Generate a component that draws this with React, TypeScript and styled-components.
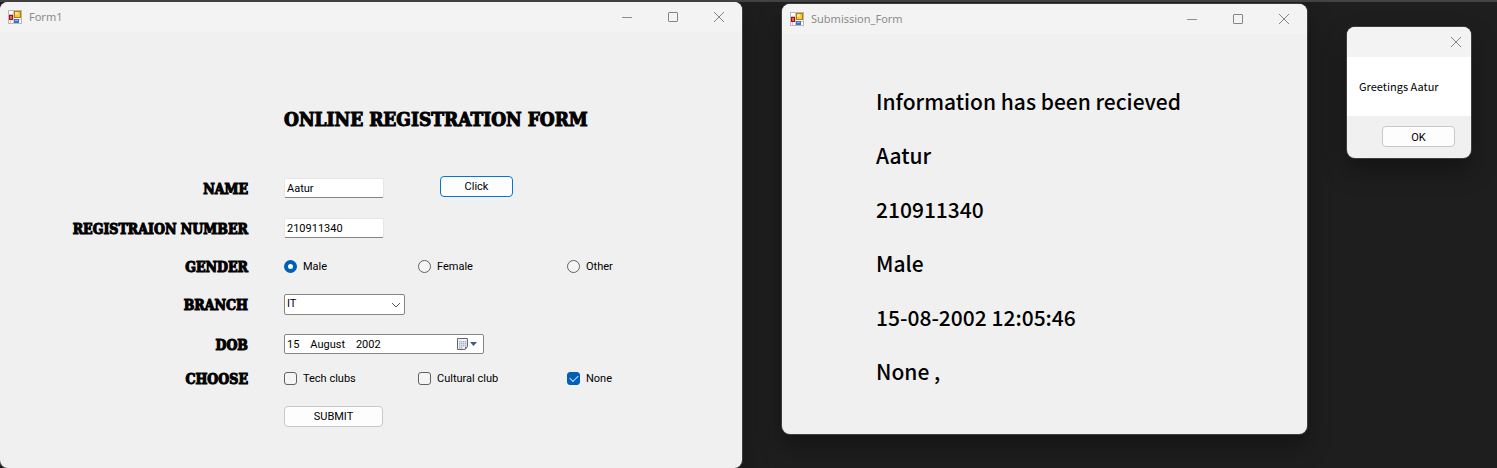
import React from 'react';
import styled, { createGlobalStyle } from 'styled-components';

const GlobalStyle = createGlobalStyle`
  * { box-sizing: border-box; }
  body {
    margin: 0;
    background: #1e1e1e;
    color: #000;
    font: 11px/16px "Noto Sans CJK JP", "Noto Sans", sans-serif;
  }
  button, input, select { font: inherit; color: inherit; margin: 0; }
`;

const Desktop = styled.main`
  display: grid;
  grid-template-columns: 742fr 525fr 124fr;
  column-gap: 40px;
  align-items: start;
  min-height: 100vh;
  padding-right: 26px;
  border-top: 2px solid #434343;
`;

const Frame = styled.section<{ $top?: number; $fill?: boolean }>`
  display: flex;
  flex-direction: column;
  align-self: ${(p) => (p.$fill ? 'stretch' : 'start')};
  margin-top: ${(p) => p.$top ?? 0}px;
  min-width: 0;
  border-radius: 8px;
  overflow: hidden;
  background: #f0f0f0;
  box-shadow: 0 0 0 1px #3c3f3e, 0 12px 24px rgba(0, 0, 0, 0.35);
`;

const TitleBar = styled.header`
  display: flex;
  align-items: center;
  height: 30px;
  padding-left: 8px;
  background: #f3f3f3;
  color: #8c8c8c;
`;

const Caption = styled.h2`
  flex: 1;
  margin: 0 0 0 7px;
  font: 400 11px/16px "Noto Sans", sans-serif;
`;

const CaptionButton = styled.button<{ $narrow?: boolean }>`
  display: flex;
  align-items: center;
  justify-content: center;
  width: ${(p) => (p.$narrow ? 30 : 46)}px;
  height: 28px;
  padding: 0;
  border: 0;
  background: none;
`;

const FormBody = styled.form`
  padding: 71px 24px 28px 0;
  font-family: Roboto, "Liberation Sans", sans-serif;
`;

const FormTitle = styled.h1`
  margin: 0 0 33px 284px;
  font: 700 19px/32px "DejaVu Serif Condensed", "DejaVu Serif", serif;
  -webkit-text-stroke: 1px #000;
  white-space: nowrap;
`;

const Row = styled.div<{ $height: number }>`
  display: grid;
  grid-template-columns: 248px 1fr;
  column-gap: 36px;
  align-items: center;
  height: ${(p) => p.$height}px;
`;

const labelFont = `
  padding-top: 2px;
  font: 700 14px/20px "DejaVu Serif Condensed", "DejaVu Serif", serif;
  -webkit-text-stroke: 1px #000;
  text-align: right;
  white-space: nowrap;
`;

const FieldLabel = styled.label`
  ${labelFont}
`;

const GroupLabel = styled.span`
  ${labelFont}
`;

const Controls = styled.div`
  display: flex;
  align-items: center;
`;

const TextBox = styled.input`
  width: 100px;
  height: 20px;
  padding: 0 2px;
  border: 1px solid #e6e6e6;
  border-bottom-color: #868686;
  border-radius: 2px;
  background: #fff;
`;

const PushButton = styled.button<{ $width?: number; $primary?: boolean }>`
  width: ${(p) => p.$width ?? 73}px;
  height: 21px;
  padding: 2px 0 0;
  border: 1px solid ${(p) => (p.$primary ? '#0078d4' : '#c8c8c8')};
  border-radius: 4px;
  background: #fdfdfd;
  font-family: Roboto, "Liberation Sans", sans-serif;
`;

const ClickSlot = styled.div`
  margin-left: 56px;
  padding-bottom: 4px;
`;

const Options = styled.div`
  display: grid;
  grid-template-columns: 134px 149px 1fr;
`;

const Option = styled.label`
  display: flex;
  align-items: center;
  gap: 6px;
  line-height: 17px;
`;

const Radio = styled.input`
  appearance: none;
  width: 13px;
  height: 13px;
  border: 1px solid #626262;
  border-radius: 50%;
  background: #f5f5f5;
  &:checked {
    border: 4px solid #005fb8;
    background: #fff;
  }
`;

const Check = styled.input`
  appearance: none;
  display: grid;
  place-items: center;
  width: 13px;
  height: 13px;
  border: 1px solid #626262;
  border-radius: 3px;
  background: #f5f5f5;
  &:checked {
    border-color: #005fb8;
    background: #005fb8;
  }
  &:checked::after {
    content: '';
    width: 7px;
    height: 4px;
    margin-bottom: 2px;
    border: solid #d6e6f5;
    border-width: 0 0 1px 1px;
    transform: rotate(-45deg);
  }
`;

const SelectWrap = styled.div`
  position: relative;
  width: 121px;
  svg {
    position: absolute;
    right: 4px;
    top: 8px;
    pointer-events: none;
  }
`;

const Select = styled.select`
  appearance: none;
  display: block;
  width: 100%;
  height: 21px;
  padding: 0 2px;
  border: 1px solid #868686;
  border-radius: 2px;
  background: #fff;
`;

const DateBox = styled.div`
  display: flex;
  align-items: center;
  width: 200px;
  height: 20px;
  padding: 0 5px 0 2px;
  border: 1px solid #868686;
  border-radius: 2px;
  background: #fff;
`;

const DateInput = styled.input`
  flex: 1;
  min-width: 0;
  height: 18px;
  padding: 0;
  border: 0;
  background: none;
  white-space: pre;
`;

const DateButton = styled.button`
  display: flex;
  padding: 0;
  border: 0;
  background: none;
`;

const Results = styled.div`
  padding: 40px 24px 36px 94px;
`;

const ResultLine = styled.p`
  margin: 0;
  font: 500 21px/54px "Noto Sans CJK JP", sans-serif;
  white-space: nowrap;
`;

const Message = styled.p`
  margin: 0;
  padding: 21px 12px 22px;
  background: #fff;
  white-space: nowrap;
`;

const MessageFooter = styled.footer`
  display: flex;
  justify-content: flex-end;
  padding: 10px 16px 11px;
`;

const Spacer = styled.div`
  flex: 1;
`;

const AppIcon = () => (
  <svg width="14" height="14" viewBox="0 0 14 14" aria-hidden="true">
    <rect x="0.5" y="0.5" width="13" height="13" fill="#fafafa" stroke="#b9b9b9" />
    <path d="M5.5 1v12M1 4.5h4M1 9.5h12M2.5 10v3" stroke="#c9c9c9" fill="none" />
    <rect x="1" y="5" width="4" height="5" fill="#a80f0a" />
    <rect x="2" y="6" width="2" height="3" fill="#e0675a" />
    <rect x="6" y="1" width="7" height="7" fill="#b17b08" />
    <rect x="7" y="2" width="5" height="5" fill="#fdc72e" />
    <rect x="7" y="2" width="3" height="3" fill="#ffe384" />
    <rect x="6" y="9" width="5" height="4" fill="#3f6fd0" />
    <rect x="7" y="10" width="3" height="1" fill="#8db6f7" />
  </svg>
);

const MinimizeIcon = () => (
  <svg width="12" height="12" fill="none" stroke="#8f8f8f" aria-hidden="true">
    <path d="M1 6.5h10" />
  </svg>
);

const MaximizeIcon = () => (
  <svg width="12" height="12" fill="none" stroke="#858585" aria-hidden="true">
    <rect x="1.5" y="1.5" width="9" height="9" rx="0.5" />
  </svg>
);

const CloseIcon = () => (
  <svg width="12" height="12" fill="none" stroke="#858585" aria-hidden="true">
    <path d="M1 1l10 10M11 1L1 11" />
  </svg>
);

const ChevronIcon = () => (
  <svg width="10" height="6" fill="none" stroke="#5f5f5f" aria-hidden="true">
    <path d="M1 1l4 4 4-4" />
  </svg>
);

const CalendarIcon = () => (
  <svg width="21" height="12" viewBox="0 0 21 12" aria-hidden="true">
    <path d="M.5 .5h10v8l-2.5 3h-7.5z" fill="#eef1f6" stroke="#6c6468" />
    <path
      d="M2 3h1.4v1.4H2zM4 3h1.4v1.4H4zM6 3h1.4v1.4H6zM8 3h1.4v1.4H8zM2 5h1.4v1.4H2zM4 5h1.4v1.4H4zM6 5h1.4v1.4H6zM8 5h1.4v1.4H8zM2 7h1.4v1.4H2zM4 7h1.4v1.4H4zM6 7h1.4v1.4H6zM8 7h1.4v1.4H8zM2 9h1.4v1.4H2zM4 9h1.4v1.4H4z"
      fill="#a9b4cc"
    />
    <path d="M8 11.5v-2.5h2.5z" fill="#6c6468" />
    <path d="M13 4h7l-3.5 4z" fill="#41598c" />
  </svg>
);

function WindowTitle({ title }: { title: string }) {
  return (
    <TitleBar>
      <AppIcon />
      <Caption>{title}</Caption>
      <CaptionButton aria-label="Minimize"><MinimizeIcon /></CaptionButton>
      <CaptionButton aria-label="Maximize"><MaximizeIcon /></CaptionButton>
      <CaptionButton aria-label="Close"><CloseIcon /></CaptionButton>
    </TitleBar>
  );
}

const genders = ['Male', 'Female', 'Other'];
const clubs = ['Tech clubs', 'Cultural club', 'None'];
const results = [
  'Information has been recieved',
  'Aatur',
  '210911340',
  'Male',
  '15-08-2002 12:05:46',
  'None ,',
];

export default function App() {
  return (
    <>
      <GlobalStyle />
      <Desktop>
        <Frame $fill>
          <WindowTitle title="Form1" />
          <FormBody onSubmit={(e) => e.preventDefault()}>
            <FormTitle>ONLINE REGISTRATION FORM</FormTitle>
            <Row $height={40}>
              <FieldLabel htmlFor="name">NAME</FieldLabel>
              <Controls>
                <TextBox id="name" defaultValue="Aatur" />
                <ClickSlot>
                  <PushButton type="button" $primary>Click</PushButton>
                </ClickSlot>
              </Controls>
            </Row>
            <Row $height={40}>
              <FieldLabel htmlFor="regno">REGISTRAION NUMBER</FieldLabel>
              <Controls><TextBox id="regno" defaultValue="210911340" /></Controls>
            </Row>
            <Row $height={36}>
              <GroupLabel id="gender">GENDER</GroupLabel>
              <Options role="radiogroup" aria-labelledby="gender">
                {genders.map((g) => (
                  <Option key={g}>
                    <Radio type="radio" name="gender" defaultChecked={g === 'Male'} />
                    {g}
                  </Option>
                ))}
              </Options>
            </Row>
            <Row $height={40}>
              <FieldLabel htmlFor="branch">BRANCH</FieldLabel>
              <SelectWrap>
                <Select id="branch" defaultValue="IT"><option>IT</option></Select>
                <ChevronIcon />
              </SelectWrap>
            </Row>
            <Row $height={40}>
              <FieldLabel htmlFor="dob">DOB</FieldLabel>
              <DateBox>
                <DateInput id="dob" defaultValue="15    August    2002" />
                <DateButton type="button" aria-label="Open calendar"><CalendarIcon /></DateButton>
              </DateBox>
            </Row>
            <Row $height={28}>
              <GroupLabel id="choose">CHOOSE</GroupLabel>
              <Options role="group" aria-labelledby="choose">
                {clubs.map((c) => (
                  <Option key={c}>
                    <Check type="checkbox" defaultChecked={c === 'None'} />
                    {c}
                  </Option>
                ))}
              </Options>
            </Row>
            <Row $height={48}>
              <span />
              <Controls><PushButton type="submit" $width={99}>SUBMIT</PushButton></Controls>
            </Row>
          </FormBody>
        </Frame>

        <Frame $top={2}>
          <WindowTitle title="Submission_Form" />
          <Results>
            {results.map((line) => <ResultLine key={line}>{line}</ResultLine>)}
          </Results>
        </Frame>

        <Frame $top={25} role="dialog" aria-label="Greeting">
          <TitleBar>
            <Spacer />
            <CaptionButton $narrow aria-label="Close"><CloseIcon /></CaptionButton>
          </TitleBar>
          <Message>Greetings Aatur</Message>
          <MessageFooter><PushButton>OK</PushButton></MessageFooter>
        </Frame>
      </Desktop>
    </>
  );
}
